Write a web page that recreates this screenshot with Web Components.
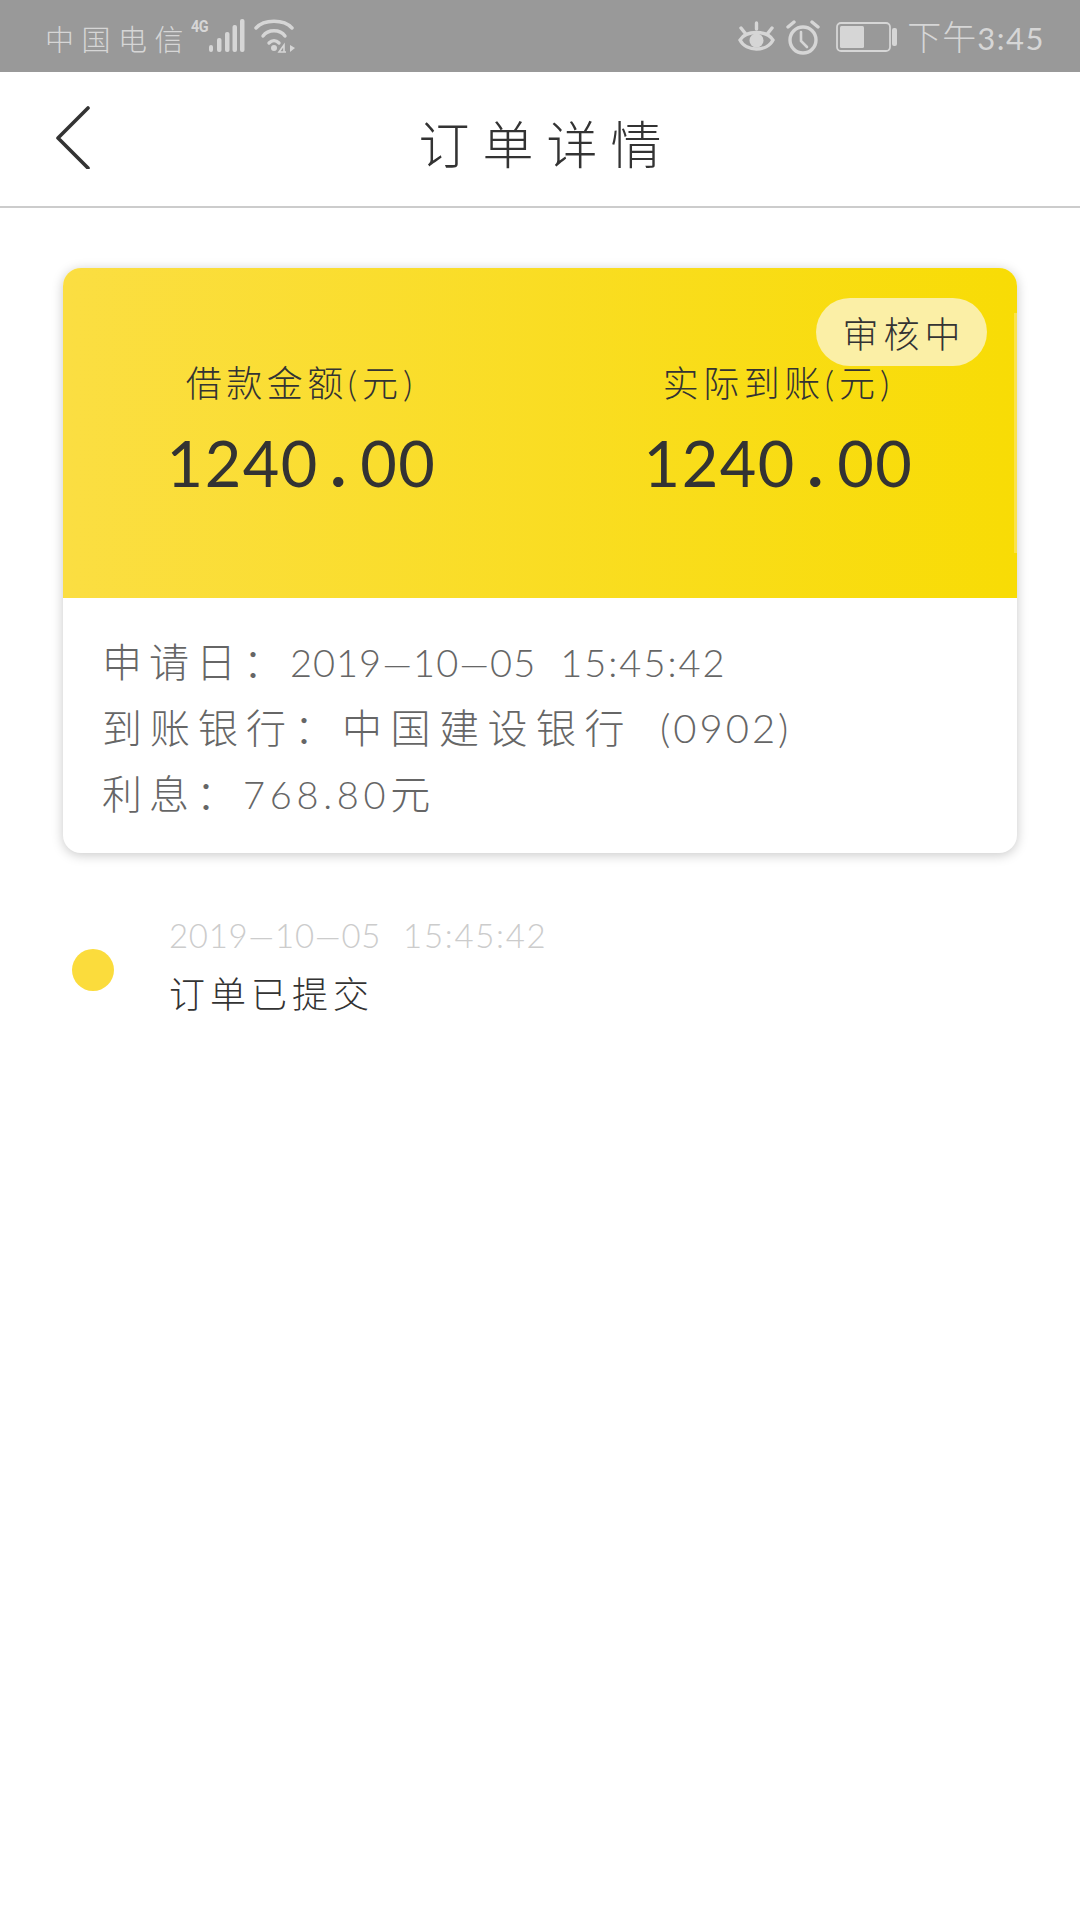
<!DOCTYPE html>
<html lang="zh-CN">
<head>
<meta charset="utf-8">
<style>
html,body{margin:0;padding:0;background:#fff;}
body{width:1080px;min-height:1920px;font-family:Lato,"Noto Sans CJK SC",sans-serif;font-weight:300;color:#333;}
</style>
</head>
<body>
<status-bar></status-bar>
<nav-header>订单详情</nav-header>
<order-card>
  <amount-col slot="amounts" label="借款金额" int="1240" dec="00"></amount-col>
  <amount-col slot="amounts" label="实际到账" int="1240" dec="00"></amount-col>
  <status-pill slot="pill">审核中</status-pill>
  <detail-line label="申请日：" date="2019—10—05" time="15:45:42"></detail-line>
  <detail-line label="到账银行：" wide cjk="中国建设银行" tail="(0902)"></detail-line>
  <detail-line label="利息：" num="768.80" cjk="元"></detail-line>
</order-card>
<timeline-item date="2019—10—05" time="15:45:42">订单已提交</timeline-item>
<script>
class Base extends HTMLElement{
  render(html){ if(!this.shadowRoot) this.attachShadow({mode:'open'}); this.shadowRoot.innerHTML=html; }
}
class StatusBar extends Base{connectedCallback(){this.render(`<style>
:host{display:flex;height:72px;background:#999;color:#d6d6d6;align-items:center;box-sizing:border-box;padding:0 35px 0 45px;font-family:Lato,"Noto Sans CJK SC",sans-serif;font-weight:300;}
svg{display:block;flex:none;}
.carrier{font-size:29px;letter-spacing:7.500px;line-height:72px;padding-top:4px;height:72px;box-sizing:border-box;white-space:nowrap;}
.g{font:700 17px/17px Roboto,sans-serif;letter-spacing:-.5px;align-self:flex-start;margin-top:18px;width:18px;transform:scaleX(.85);transform-origin:left;}
.sp{flex:1;}
.time{font-size:31px;letter-spacing:1.500px;white-space:nowrap;line-height:72px;padding-top:1px;height:72px;box-sizing:border-box;font-weight:400;}
.time b{font-weight:300;font-size:34px;letter-spacing:1px;}
</style>
<span class="carrier">中国电信</span><span class="g">4G</span>
<svg width="36" height="40" viewBox="0 0 36 40" fill="#d6d6d6"><rect x="0" y="29" width="4" height="7" rx="2"/><rect x="8" y="22" width="4.500" height="14" rx="2"/><rect x="16" y="16" width="4.500" height="20" rx="2"/><rect x="23.500" y="9" width="4.500" height="27" rx="2"/><rect x="31" y="3" width="4.500" height="33" rx="2"/></svg>
<svg width="42" height="40" viewBox="0 0 42 40" style="margin-left:9px" fill="none" stroke="#d6d6d6" stroke-width="3.400" stroke-linecap="round"><path d="M2 12C10 3 30 3 38 12"/><path d="M9 20C14 13 26 13 31 20"/><path d="M15 27C18 24 22 24 25 27"/><circle cx="20" cy="32" r="3" fill="#d6d6d6" stroke="none"/><path d="M32 36h-7l5-7v7" stroke-width="1.600" fill="none" stroke-linecap="butt"/><path d="M36 29v7l5-4z" fill="#d6d6d6" stroke="none"/></svg>
<span class="sp"></span>
<svg width="37" height="34" viewBox="0 0 37 34" fill="none" stroke="#d6d6d6" stroke-linecap="round" style="margin-right:11px;margin-top:3px"><path d="M2 19C8 9 29 9 35 19C29 31 8 31 2 19Z" stroke-width="3.400"/><circle cx="18.500" cy="19.500" r="7" fill="#d6d6d6" stroke="none"/><path d="M18.500 2v6M3 7l4 5M34 7l-4 5" stroke-width="3.400"/></svg>
<svg width="34" height="35" viewBox="0 0 34 35" fill="none" stroke="#d6d6d6" stroke-linecap="round" style="margin-right:16px;margin-top:2px"><circle cx="17" cy="20" r="13" stroke-width="3.400"/><path d="M15 12v9l6 6" stroke-width="2.600"/><path d="M2 7l6-5M32 7l-6-5" stroke-width="3.400"/></svg>
<svg width="61" height="30" viewBox="0 0 61 30" style="margin-right:10px;margin-top:1px"><rect x="1" y="1" width="53" height="28" rx="4" fill="none" stroke="#d6d6d6" stroke-width="1.800"/><rect x="4" y="4" width="24" height="22" rx="1.500" fill="#d6d6d6"/><rect x="56" y="6" width="5" height="18" rx="2" fill="#d6d6d6"/></svg>
<span class="time"><b>下午</b>3:45</span>`);}}
class NavHeader extends Base{connectedCallback(){this.render(`<style>
:host{display:grid;grid-template-columns:134px 1fr 134px;align-items:center;height:134px;border-bottom:2px solid #ccc;background:#fff;color:#333;}
svg{display:block;margin:0 0 4px 55px;}
.t{text-align:center;font-size:51px;font-weight:300;letter-spacing:13px;padding:11px 0 0 13px;line-height:123px;white-space:nowrap;}
</style>
<svg width="36" height="64" viewBox="0 0 36 64" fill="none" stroke="#333" stroke-width="3.600" stroke-linecap="round" stroke-linejoin="round"><path d="M33 3L3 33L33 63"/></svg>
<div class="t"><slot></slot></div><span></span>`);}}
class StatusPill extends Base{connectedCallback(){this.render(`<style>
:host{display:flex;align-items:center;justify-content:center;width:171px;height:68px;border-radius:34px;background:#fbefa6;color:#333;font-size:36px;font-weight:300;letter-spacing:5px;padding-left:5px;box-sizing:border-box;}
</style><slot></slot>`);}}
class AmountCol extends Base{connectedCallback(){const l=this.getAttribute('label'),i=this.getAttribute('int'),d=this.getAttribute('dec');this.render(`<style>
:host{display:flex;flex-direction:column;align-items:center;flex:1 1 0;color:#333;}
.l{font-size:36px;font-weight:300;letter-spacing:4.500px;line-height:40px;height:40px;white-space:nowrap;margin-bottom:20px;}
.l span{letter-spacing:5px;}
.a{font-size:63px;line-height:80px;letter-spacing:1.500px;font-weight:400;white-space:nowrap;}
.a i{font-style:normal;font-weight:900;margin:0 13px 0 12px;}
</style><div class="l">${l}<span>(元)</span></div><div class="a">${i}<i>.</i>${d}</div>`);}}
class OrderCard extends Base{connectedCallback(){this.render(`<style>
:host{display:block;margin:60px 63px 0;width:954px;border-radius:18px;background:#fff;box-shadow:0 2px 12px rgba(0,0,0,.22);overflow:hidden;position:relative;}
.head{position:relative;height:330px;box-sizing:border-box;padding-top:95px;display:flex;background:linear-gradient(90deg,#fbde42,#f8dc05);}
.pill{position:absolute;top:30px;right:30px;}
.strip{position:absolute;right:0;top:45px;width:3px;height:240px;background:#fbe34a;}
.body{padding:31px 39px 26px;}
</style>
<div class="head"><slot name="amounts"></slot><span class="strip"></span><div class="pill"><slot name="pill"></slot></div></div>
<div class="body"><slot></slot></div>`);}}
class DetailLine extends Base{connectedCallback(){const a=n=>this.getAttribute(n)||'';const w=this.hasAttribute('wide');this.render(`<style>
:host{display:block;height:66px;line-height:66px;font-size:38px;color:#666;white-space:pre;}
.c{font-size:40px;letter-spacing:${w?8:7}px;}
.v{font-size:40px;letter-spacing:8.500px;}
.d{letter-spacing:1px;margin-right:24px;}
.t{letter-spacing:2px;}
.n{letter-spacing:4.700px;}
.tail{letter-spacing:3px;margin-left:27px;font-size:40px;}
</style><span class="c">${a('label')}</span>${a('date')?`<span class="d">${a('date')}</span><span class="t">${a('time')}</span>`:''}${a('num')?`<span class="n">${a('num')}</span>`:''}${a('cjk')?`<span class="v">${a('cjk')}</span>`:''}${a('tail')?`<span class="tail">${a('tail')}</span>`:''}`);}}
class TimelineItem extends Base{connectedCallback(){this.render(`<style>
:host{display:flex;align-items:center;margin:53px 0 0 72px;}
.dot{width:42px;height:42px;border-radius:50%;background:#fbdc3c;flex:none;margin:10px 55px 0 0;}
.time{font-size:33px;line-height:59px;color:#ccc;white-space:pre;}
.time .d{letter-spacing:.7px;margin-right:22px;}
.time .t{letter-spacing:1.700px;}
.txt{font-size:36px;font-weight:300;line-height:59px;color:#333;letter-spacing:5px;}
</style><span class="dot"></span><div><div class="time"><span class="d">${this.getAttribute('date')}</span><span class="t">${this.getAttribute('time')}</span></div><div class="txt"><slot></slot></div></div>`);}}
customElements.define('status-bar',StatusBar);
customElements.define('nav-header',NavHeader);
customElements.define('status-pill',StatusPill);
customElements.define('amount-col',AmountCol);
customElements.define('order-card',OrderCard);
customElements.define('detail-line',DetailLine);
customElements.define('timeline-item',TimelineItem);
</script>
</body>
</html>
